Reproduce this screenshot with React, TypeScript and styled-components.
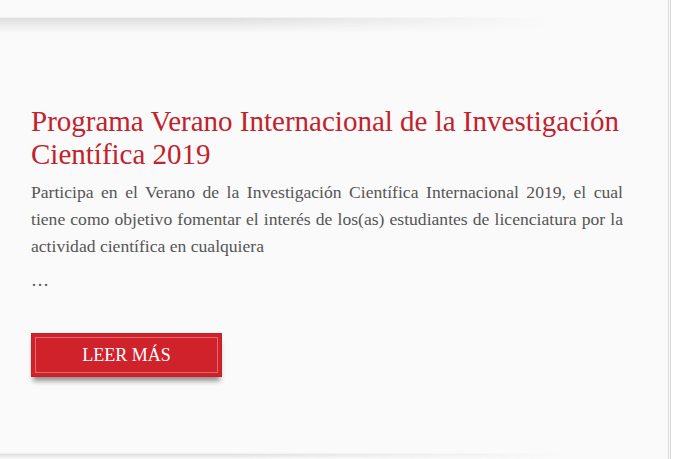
import React from "react";
import styled, { createGlobalStyle } from "styled-components";

const Global = createGlobalStyle`
  html, body { margin: 0; padding: 0; background: #fafafa; }
  body { font-family: "Liberation Serif", "Times New Roman", serif; }
  * { box-sizing: border-box; }
`;

const Page = styled.div`
  display: flex;
  width: 675px;
  height: 459px;
  overflow: hidden;
  background: #fafafa;
`;

const Main = styled.div`
  flex: 1;
  display: flex;
  flex-direction: column;
  border-right: 3px double #d9d9d9;
`;

const Gutter = styled.div`
  width: 4px;
  background: #ffffff;
`;

const Spacer = styled.div<{ $h: number }>`
  height: ${(p) => p.$h}px;
  flex-shrink: 0;
`;

const Separator = styled.div<{ $h: number; $fade: number }>`
  height: ${(p) => p.$h}px;
  border-top: 1px solid #f0f0f0;
  background: linear-gradient(to bottom, #dedede, rgba(250, 250, 250, 0));
  -webkit-mask-image: linear-gradient(to right, #000 0%, #000 35%, transparent ${(p) => p.$fade}%);
  mask-image: linear-gradient(to right, #000 0%, #000 35%, transparent ${(p) => p.$fade}%);
  flex-shrink: 0;
`;

const Article = styled.article`
  flex: 1;
  padding: 72px 40px 0 31px;
`;

const Title = styled.h2`
  margin: 0;
  font-family: "Liberation Serif", "Times New Roman", serif;
  font-weight: normal;
  font-size: 29px;
  line-height: 33px;
  color: #c1222c;
`;

const Excerpt = styled.p`
  margin: 8px 0 0;
  width: 592px;
  font-size: 17.6px;
  line-height: 27px;
  color: #555555;
  text-align: justify;
`;

const Ellipsis = styled.p`
  margin: 7px 0 0;
  font-size: 18px;
  line-height: 27px;
  color: #555555;
`;

const ReadMore = styled.a`
  display: flex;
  align-items: center;
  justify-content: center;
  width: 191px;
  height: 44px;
  margin-top: 39px;
  background: #d0222b;
  border: 1px solid #c81e27;
  color: #ffffff;
  font-family: "Liberation Serif", "Times New Roman", serif;
  font-size: 18px;
  text-decoration: none;
  text-transform: uppercase;
  box-shadow: inset 0 0 0 3px #d0222b, inset 0 0 0 4px rgba(255, 255, 255, 0.32),
    0 6px 5px -2px rgba(0, 0, 0, 0.42);
`;

export default function App() {
  return (
    <>
      <Global />
      <Page>
        <Main>
          <Spacer $h={17} />
          <Separator $h={16} $fade={82} />
          <Article>
            <Title>Programa Verano Internacional de la Investigación Científica 2019</Title>
            <Excerpt>
              Participa en el Verano de la Investigación Científica Internacional 2019, el cual
              tiene como objetivo fomentar el interés de los(as) estudiantes de licenciatura por la
              actividad científica en cualquiera
            </Excerpt>
            <Ellipsis>…</Ellipsis>
            <ReadMore href="#">Leer más</ReadMore>
          </Article>
          <Separator $h={6} $fade={85} />
        </Main>
        <Gutter />
      </Page>
    </>
  );
}
